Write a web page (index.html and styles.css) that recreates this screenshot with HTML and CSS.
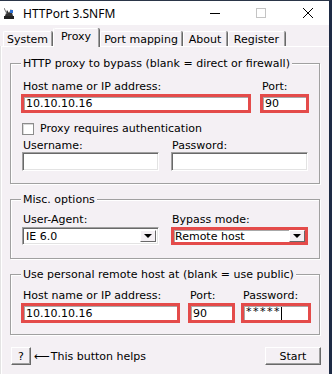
FILE: index.html
```html
<!DOCTYPE html>
<html>
<head>
<meta charset="utf-8">
<link rel="stylesheet" href="styles.css">
</head>
<body>
<div class="window">
  <div class="titlebar">
    <svg class="appicon" width="10" height="11" viewBox="0 0 10 11">
      <rect x="0" y="8" width="10" height="3" fill="#222"/>
      <path d="M1 8 L3 2 L5 5 L7 1 L9 8 Z" fill="#333"/>
      <rect x="6" y="2" width="3" height="3" fill="#2f6fd0"/>
      <line x1="0" y1="0" x2="3" y2="6" stroke="#777" stroke-width="1"/>
    </svg>
    <span class="title">HTTPort 3.SNFM</span>
    <div class="caption">
      <span class="cbtn cmin"><svg width="10" height="10" viewBox="0 0 10 10"><line x1="0" y1="5.5" x2="10" y2="5.5" stroke="#000"/></svg></span>
      <span class="cbtn cmax"><svg width="10" height="10" viewBox="0 0 10 10"><rect x="0.5" y="0.5" width="9" height="9" fill="none" stroke="#c4c4c4"/></svg></span>
      <span class="cbtn cclose"><svg width="10" height="10" viewBox="0 0 10 10"><path d="M0 0 L10 10 M10 0 L0 10" stroke="#000" stroke-width="1"/></svg></span>
    </div>
  </div>
  <div class="tabs">
    <div class="tab t-system">System</div>
    <div class="tab active t-proxy">Proxy</div>
    <div class="tab t-port">Port mapping</div>
    <div class="tab t-about">About</div>
    <div class="tab t-reg">Register</div>
  </div>
  <div class="panel">
    <fieldset class="group g1">
      <legend>HTTP proxy to bypass (blank = direct or firewall)</legend>
      <div class="row">
        <div class="field w-host1"><label>Host name or IP address:</label><div class="edit red">10.10.10.16</div></div>
        <div class="field w-port1"><label>Port:</label><div class="edit red">90</div></div>
      </div>
      <div class="check"><span class="box"></span><span>Proxy requires authentication</span></div>
      <div class="row row-auth">
        <div class="field w-half"><label>Username:</label><div class="edit plain"></div></div>
        <div class="field w-half"><label>Password:</label><div class="edit plain"></div></div>
      </div>
    </fieldset>

    <fieldset class="group g2">
      <legend>Misc. options</legend>
      <div class="row row-misc">
        <div class="field w-half"><label>User-Agent:</label>
          <div class="combo plain"><span class="ctext">IE 6.0</span><span class="drop"><span class="tri"></span></span></div>
        </div>
        <div class="field w-half"><label>Bypass mode:</label>
          <div class="combo red"><span class="ctext">Remote host</span><span class="drop"><span class="tri"></span></span></div>
        </div>
      </div>
    </fieldset>

    <fieldset class="group g3">
      <legend>Use personal remote host at (blank = use public)</legend>
      <div class="row row-remote">
        <div class="field w-host3"><label>Host name or IP address:</label><div class="edit red tall">10.10.10.16</div></div>
        <div class="field w-port3"><label>Port:</label><div class="edit red tall">90</div></div>
        <div class="field w-pass3"><label>Password:</label><div class="edit red tall pw"><span class="stars">*****</span><span class="caret"></span></div></div>
      </div>
    </fieldset>

    <div class="bottom">
      <div class="btn help">?</div>
      <span class="hint"><span class="arrow">⟵</span>This button helps</span>
      <div class="btn start">Start</div>
    </div>
  </div>
</div>
</body>
</html>
```

FILE: styles.css
```css
* { box-sizing: border-box; }
html, body { margin: 0; padding: 0; }
body {
  width: 332px;
  height: 374px;
  overflow: hidden;
  background: #f4f0f4;
  font-family: "DejaVu Sans", Verdana, sans-serif;
  font-size: 11px;
  line-height: 13px;
  color: #000;
}
.window {
  height: 374px;
  border-top: 1px solid #2a3548;
  border-right: 3px solid #1e2b45;
  display: flex;
  flex-direction: column;
}
.titlebar {
  height: 24px;
  flex: none;
  background: #fff;
  display: flex;
  align-items: center;
}
.appicon { margin-left: 4px; margin-top: 1px; }
.title {
  margin-left: 9px;
  font-family: "Noto Sans", "Open Sans", sans-serif;
  font-size: 12px;
  line-height: 16px;
  margin-top: 1px;
}
.caption { margin-left: auto; display: flex; height: 24px; }
.cbtn { display: flex; align-items: center; justify-content: center; height: 24px; }
.cmin { width: 40px; }
.cmax { width: 52px; }
.cclose { width: 42px; }

.tabs {
  height: 21px;
  flex: none;
  display: flex;
  align-items: flex-end;
  padding-left: 3px;
}
.tab {
  height: 15px;
  padding: 1px 0 0 0;
  text-align: center;
  border-top: 1px solid #fff;
  border-left: 1px solid #fff;
  border-right: 1px solid #a0a0a0;
  box-shadow: 1px 0 0 #696969;
  border-radius: 2px 2px 0 0;
  margin-right: 1px;
}
.tab.active {
  height: 19px;
  padding-top: 1px;
  position: relative;
  margin-bottom: -1px;
  background: #f4f0f4;
  z-index: 1;
}
.t-system { width: 49px; }
.t-proxy { width: 46px; }
.t-port { width: 82px; }
.t-about { width: 44px; }
.t-reg { width: 57px; }

.panel {
  flex: 1;
  border-top: 1px solid #fff;
  border-left: 1px solid #fff;
  box-shadow: -1px 0 0 #e3e3e3;
  margin-left: 1px;
  padding: 10px 0 0 8px;
}

.group {
  width: 310px;
  margin: 0;
  padding: 0 0 0 10px;
  border: 1px solid #a0a0a0;
  box-shadow: 1px 1px 0 #fff, inset 1px 1px 0 #fff;
  min-inline-size: 0;
}
.group legend {
  margin-left: 0;
  padding: 0 2px;
  line-height: 13px;
  background: #f4f0f4;
}
.g1 { padding-top: 10px; padding-bottom: 12px; }
.g2 { margin-top: 9px; padding-top: 7px; padding-bottom: 13px; }
.g3 { margin-top: 9px; padding-top: 8px; padding-bottom: 11px; }

.row { display: flex; }
.field { display: flex; flex-direction: column; }
.field label { padding-left: 2px; height: 13px; margin-bottom: 1px; }
.w-host1 { width: 230px; }
.w-port1 { width: 49px; margin-left: 9px; }
.row-auth, .row-misc { padding-left: 1px; }
.w-half { width: 137px; }
.w-half + .w-half { margin-left: 12px; }
.row-auth .field label, .row-misc .field label { padding-left: 1px; }
.row-auth .field label { margin-bottom: 0; }
.w-host3 { width: 159px; }
.w-port3 { width: 47px; margin-left: 8px; }
.w-pass3 { width: 70px; margin-left: 6px; }

.edit {
  height: 19px;
  background: #fff;
  padding-left: 3px;
  display: flex;
  align-items: center;
  white-space: nowrap;
  overflow: hidden;
}
.edit.plain {
  border-top: 1px solid #a0a0a0;
  border-left: 1px solid #a0a0a0;
  border-bottom: 1px solid #fff;
  border-right: 1px solid #fff;
  box-shadow: inset 1px 1px 0 #696969, inset -1px -1px 0 #e3e3e3;
}
.edit.red {
  border: 3px solid #e44b4a;
  box-shadow: inset 1px 1px 0 #a8a8a8;
  padding-left: 2px;
}
.edit.tall { height: 20px; }
.pw { align-items: flex-start; padding-top: 0; }
.stars { letter-spacing: 1.5px; line-height: 12px; }
.caret { width: 1px; height: 13px; background: #000; margin-left: 0; margin-top: 1px; }

.check { display: flex; align-items: center; margin-top: 9px; height: 13px; padding-left: 1px; }
.box {
  width: 12px; height: 12px;
  background: #fff;
  border: 1px solid #8c8c8c;
  box-shadow: inset 1px 1px 0 #d8d8d8;
  margin-right: 6px;
}
.row-auth { margin-top: 4px; }

.combo {
  height: 18px;
  background: #fff;
  display: flex;
  align-items: center;
  padding-left: 2px;
}
.combo.plain {
  border-top: 1px solid #a0a0a0;
  border-left: 1px solid #a0a0a0;
  border-bottom: 1px solid #fff;
  border-right: 1px solid #fff;
  box-shadow: inset 1px 1px 0 #696969, inset -1px -1px 0 #e3e3e3;
  padding: 2px 2px 2px 3px;
}
.combo.red {
  border: 3px solid #e44b4a;
  padding: 0 0 0 1px;
  box-shadow: inset 1px 1px 0 #a8a8a8;
}
.ctext { flex: 1; }
.drop {
  width: 16px;
  height: 12px;
  background: #f4f0f4;
  border-top: 1px solid #fff;
  border-left: 1px solid #fff;
  border-right: 1px solid #696969;
  border-bottom: 1px solid #696969;
  display: flex;
  align-items: center;
  justify-content: center;
}
.tri {
  width: 0; height: 0;
  border-left: 4px solid transparent;
  border-right: 4px solid transparent;
  border-top: 4px solid #000;
}

.bottom {
  display: flex;
  align-items: center;
  margin-top: 12px;
  padding-left: 1px;
  width: 311px;
}
.btn {
  height: 18px;
  display: flex;
  align-items: center;
  justify-content: center;
  border-top: 1px solid #fff;
  border-left: 1px solid #fff;
  border-right: 1px solid #696969;
  border-bottom: 1px solid #696969;
  box-shadow: inset -1px -1px 0 #a0a0a0;
  background: #f4f0f4;
}
.help { width: 20px; }
.start { width: 56px; margin-left: auto; }
.hint { margin-left: 3px; display: flex; align-items: center; }
.arrow { margin-right: 1px; }
```
